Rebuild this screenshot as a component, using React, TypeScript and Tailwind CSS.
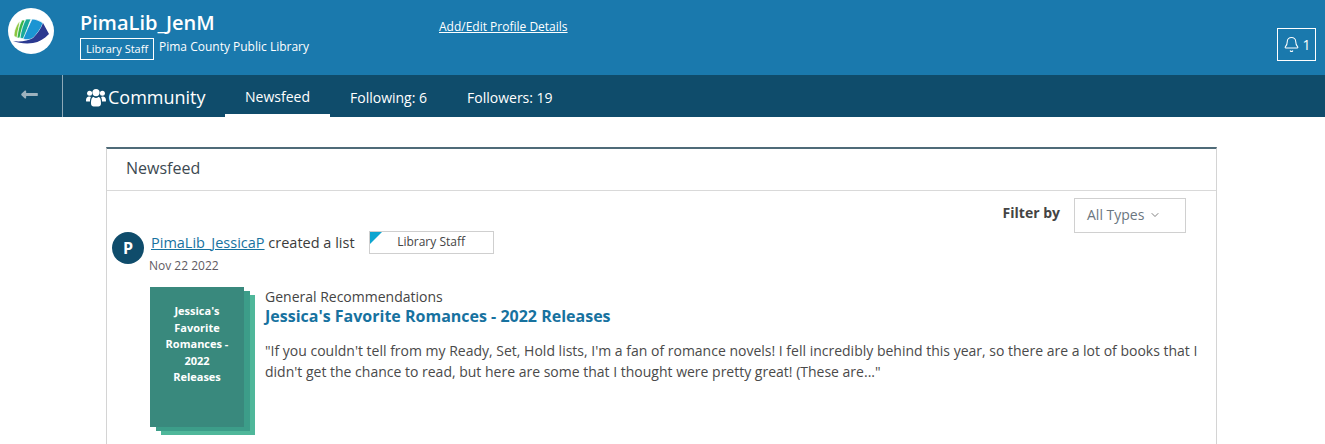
import { Bell, ChevronDown } from 'lucide-react';
import { FaLongArrowAltLeft } from 'react-icons/fa';

function Logo() {
  return (
    <div className="w-[46px] h-[46px] rounded-full bg-white shrink-0">
      <svg viewBox="0 0 46 46" className="w-[46px] h-[46px]" aria-hidden="true">
        <g stroke="#ffffff" strokeWidth="0.7">
          <path d="M6 28 C6 23 8 17 12 13 C11 18 10 24 9 30 Z" fill="#8cc63f" />
          <path d="M9 30 C10 23 11 17 14 12 L17 12 C15 18 13 25 12 30 Z" fill="#39b54a" />
          <path d="M12 30 C13 23 15 16 18 11 L23 11 C20 18 18 25 16 31 Z" fill="#19a99a" />
          <path d="M15 31 C18 24 21 17 24 11 C28 11 32 13 35 15 C33 21 29 26 25 30 C22 32 18 32 15 31 Z" fill="#1b95d3" />
        </g>
        <path d="M35 15 L41 26 C36 31 31 34 25 35 C18 36 10 35 5 33 C12 34 20 33 25 30 C29 26 33 21 35 15 Z" fill="#2b3990" />
      </svg>
    </div>
  );
}

function UsersGlyph() {
  return (
    <svg viewBox="0 0 20 19" className="w-[20px] h-[19px]" fill="currentColor" aria-hidden="true">
      <circle cx="3.6" cy="5.2" r="2.5" />
      <circle cx="16.4" cy="5.2" r="2.5" />
      <circle cx="10" cy="4.6" r="3.6" />
      <path d="M0 13 C0 9.5 1.5 8.5 3.4 8.5 C4 8.5 4.6 8.8 5 9.1 C4.2 10.4 4 12 4 13.6 L1.4 13.6 C0.5 13.6 0 13.4 0 13 Z" />
      <path d="M20 13 C20 9.5 18.5 8.5 16.6 8.5 C16 8.5 15.4 8.8 15 9.1 C15.8 10.4 16 12 16 13.6 L18.6 13.6 C19.5 13.6 20 13.4 20 13 Z" />
      <path d="M5 15.5 C5 11 6 9 7.6 9 C8.4 9.6 9.2 9.9 10 9.9 C10.8 9.9 11.6 9.6 12.4 9 C14 9 15 11 15 15.5 C15 17.4 13.8 18.4 12.4 18.4 L7.6 18.4 C6.2 18.4 5 17.4 5 15.5 Z" />
    </svg>
  );
}

export default function App() {
  return (
    <main className="h-[444px] overflow-hidden bg-white font-['Open_Sans',sans-serif] text-[#3c3c3c]">
      <header className="h-[75px] bg-[#1a79ad] flex items-start text-white">
        <div className="ml-[8px] mt-[8px]">
          <Logo />
        </div>
        <div className="ml-[26px] mt-[9px] w-[359px] shrink-0">
          <h1 className="text-[20px] leading-[27px] font-semibold">PimaLib_JenM</h1>
          <div className="flex items-start mt-[2px]">
            <span className="border border-white h-[22px] w-[74px] text-[11px] leading-[20px] text-center">Library Staff</span>
            <span className="ml-[5px] text-[12px] leading-[18px]">Pima County Public Library</span>
          </div>
        </div>
        <a href="#" className="mt-[18px] text-[12px] leading-[18px] underline">Add/Edit Profile Details</a>
        <button type="button" className="ml-auto mr-[9px] mt-[28px] w-[39px] h-[33px] border border-white flex items-center justify-center gap-[2px] pl-[1px]" aria-label="Notifications">
          <Bell className="w-[17px] h-[17px]" strokeWidth={1.5} />
          <span className="text-[14px] leading-none">1</span>
        </button>
      </header>

      <nav className="h-[42px] bg-[#0f4c6b] flex text-white">
        <div className="w-[63px] h-full border-r border-[#8ea9b8] flex items-center justify-center pr-[4px] pb-[3px]">
          <FaLongArrowAltLeft className="w-[19px] h-[19px] text-[#9db2be]" />
        </div>
        <div className="ml-[23px] flex items-center w-[139px] shrink-0 pt-[2px]">
          <UsersGlyph />
          <span className="ml-[2px] text-[18px] leading-[24px]">Community</span>
        </div>
        <a href="#" className="w-[105px] h-full border-b-[3px] border-white flex items-center justify-center text-[14px] pt-[3px]">Newsfeed</a>
        <a href="#" className="ml-[20px] h-full flex items-center text-[14px] pt-[3px]">Following: 6</a>
        <a href="#" className="ml-[40px] h-full flex items-center text-[14px] pt-[3px]">Followers: 19</a>
      </nav>

      <section className="mx-[106px] mt-[30px] border-x border-[#d4d4d4] border-t-2 border-t-[#4f6b78] h-[400px] w-[1111px]">
        <h2 className="h-[42px] border-b border-[#d9d9d9] pl-[19px] text-[16px] leading-[39px] text-[#3d4a52]">Newsfeed</h2>

        <div className="flex items-start justify-end mr-[30px] mt-[7px] h-[35px]">
          <span className="mt-[5px] text-[14px] leading-[20px] font-bold text-[#444]">Filter by</span>
          <div className="ml-[14px] w-[112px] h-[35px] border border-[#d0d0d0] flex items-center pl-[12px] pb-[2px] text-[14px] text-[#6b7680]">
            All Types
            <ChevronDown className="ml-[5px] w-[12px] h-[12px] text-[#555]" strokeWidth={1.5} />
          </div>
        </div>

        <div className="flex items-start ml-[5px] -mt-[2px]">
          <div className="w-[32px] h-[32px] mt-[1px] rounded-full bg-[#0f4c6b] text-white flex items-center justify-center text-[16px] font-bold shrink-0">P</div>
          <div className="ml-[6px]">
            <div className="flex items-start -mt-[1px]">
              <p className="text-[14.5px] leading-[26px] ml-[1px]">
                <a href="#" className="text-[#17729f] underline">PimaLib_JessicaP</a>
                <span className="text-[#3b3b3b]"> created a list</span>
              </p>
              <div className="relative ml-[14px] mt-[1px] w-[125px] h-[23px] border border-[#cfcfcf] text-center text-[12px] leading-[20px] text-[#444] overflow-hidden">
                <span className="absolute left-0 top-0 w-0 h-0 border-t-[12px] border-r-[12px] border-t-[#0ea5d0] border-r-transparent" />
                Library Staff
              </div>
            </div>
            <p className="text-[12px] leading-[16px] mt-[2px] -ml-[1px] text-[#5f5a63]">Nov 22 2022</p>
          </div>
        </div>

        <div className="flex items-start ml-[43px] mt-[13px]">
          <div className="w-[94px] h-[140px] bg-[#39897d] shadow-[6px_4px_0_#3c9d89,11px_8px_0_#4fb79a] shrink-0 pt-[16px] px-[10px] text-white text-center text-[11px] leading-[16.5px] font-bold">
            Jessica's Favorite Romances - 2022 Releases
          </div>
          <div className="ml-[21px] w-[940px]">
            <p className="text-[14px] leading-[19px] text-[#444]">General Recommendations</p>
            <a href="#" className="block text-[16px] leading-[20px] font-bold text-[#17729f]">Jessica's Favorite Romances - 2022 Releases</a>
            <p className="mt-[14px] text-[14px] leading-[21px] text-[#4a4a4a]">
              "If you couldn't tell from my Ready, Set, Hold lists, I'm a fan of romance novels! I fell incredibly behind this year, so there are a lot of books that I didn't get the chance to read, but here are some that I thought were pretty great! (These are..."
            </p>
          </div>
        </div>
      </section>
    </main>
  );
}
